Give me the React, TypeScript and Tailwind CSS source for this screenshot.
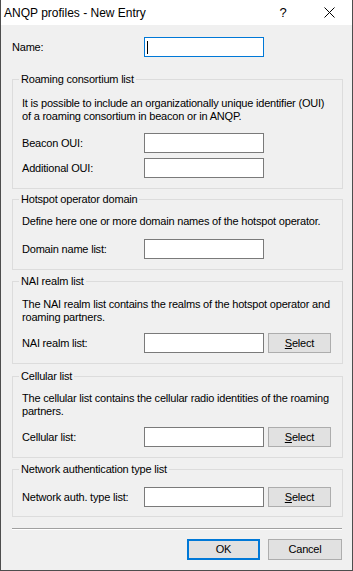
import type { ReactNode } from 'react';

function TextBox({ focused }: { focused?: boolean }) {
  return (
    <div
      className={
        'w-[120px] h-[20px] bg-white border flex items-center ' +
        (focused ? 'border-[#0078d7]' : 'border-[#7a7a7a]')
      }
    >
      {focused && <span className="ml-[2px] w-px h-[13px] bg-black"></span>}
    </div>
  );
}

function SelectButton() {
  return (
    <button className="ml-[4px] w-[63px] h-[20px] bg-[#e1e1e1] border border-[#adadad] text-black leading-none">
      <span className="underline underline-offset-1">S</span>elect
    </button>
  );
}

function Row({ label, select, className }: { label: string; select?: boolean; className?: string }) {
  return (
    <div className={'flex items-center h-[20px] pl-[9px] ' + (className || '')}>
      <span className="w-[122px]">{label}</span>
      <TextBox />
      {select && <SelectButton />}
    </div>
  );
}

function GroupBox({
  title,
  className,
  children,
}: {
  title: string;
  className?: string;
  children: ReactNode;
}) {
  return (
    <div className={'w-[331px] border border-[#dcdcdc] ' + (className || '')}>
      <span className="block w-fit -mt-[8px] ml-[6px] px-[2px] leading-[14px] bg-[#f0f0f0]">
        {title}
      </span>
      {children}
    </div>
  );
}

export default function App() {
  return (
    <div className="w-[353px] h-[571px] flex flex-col bg-[#f0f0f0] border-x border-b border-[#4d4d4d] text-black font-['Liberation_Sans',Arial,sans-serif] text-[11px] tracking-[-0.2px]">
      {/* title bar */}
      <div className="h-[25px] bg-white flex items-center shrink-0">
        <span className="flex-1 pl-[3px] text-[12px] tracking-normal">ANQP profiles - New Entry</span>
        <span className="w-[46px] text-center text-[13px] tracking-normal">?</span>
        <span className="w-[46px] flex justify-center">
          <svg width="11" height="11" viewBox="0 0 11 11">
            <path d="M0.5 0.5 L10.5 10.5 M10.5 0.5 L0.5 10.5" stroke="#000" strokeWidth="1" fill="none" />
          </svg>
        </span>
      </div>

      <div className="pl-[11px] pt-[12px] flex flex-col">
        <div className="flex items-center h-[20px]">
          <span className="w-[132px]">Name:</span>
          <TextBox focused />
        </div>

        <GroupBox title="Roaming consortium list" className="mt-[22px] pb-[10px]">
          <p className="mt-[11px] pl-[9px] leading-[13px]">
            It is possible to include an organizationally unique identifier (OUI)
            <br />
            of a roaming consortium in beacon or in ANQP.
          </p>
          <Row label="Beacon OUI:" className="mt-[10px]" />
          <Row label="Additional OUI:" className="mt-[5px]" />
        </GroupBox>

        <GroupBox title="Hotspot operator domain" className="mt-[10px] pb-[10px]">
          <p className="mt-[9px] pl-[9px] leading-[13px]">
            Define here one or more domain names of the hotspot operator.
          </p>
          <Row label="Domain name list:" className="mt-[11px]" />
        </GroupBox>

        <GroupBox title="NAI realm list" className="mt-[11px] pb-[10px]">
          <p className="mt-[10px] pl-[9px] leading-[13px]">
            The NAI realm list contains the realms of the hotspot operator and
            <br />
            roaming partners.
          </p>
          <Row label="NAI realm list:" select className="mt-[9px]" />
        </GroupBox>

        <GroupBox title="Cellular list" className="mt-[12px] pb-[10px]">
          <p className="mt-[9px] pl-[9px] leading-[13px]">
            The cellular list contains the cellular radio identities of the roaming
            <br />
            partners.
          </p>
          <Row label="Cellular list:" select className="mt-[9px]" />
        </GroupBox>

        <GroupBox title="Network authentication type list" className="mt-[11px] pb-[9px]">
          <Row label="Network auth. type list:" select className="mt-[11px]" />
        </GroupBox>

        <div className="mt-[11px] w-[330px] border-t border-b border-t-[#a0a0a0] border-b-white"></div>

        <div className="mt-[9px] w-[330px] flex justify-end gap-[8px]">
          <button className="w-[73px] h-[21px] bg-[#e1e1e1] border-2 border-[#0078d7] leading-none">OK</button>
          <button className="w-[74px] h-[21px] bg-[#e1e1e1] border border-[#adadad] leading-none">Cancel</button>
        </div>
      </div>
    </div>
  );
}
